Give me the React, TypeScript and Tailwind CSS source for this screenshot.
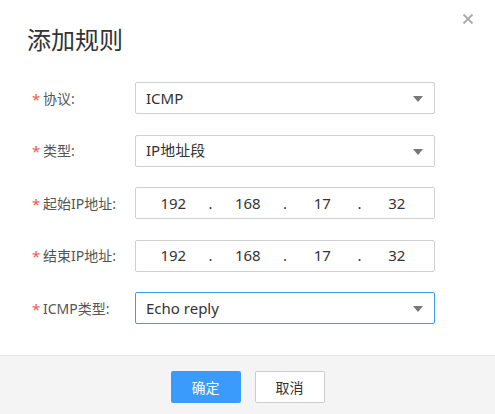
import React from "react";

const font = { fontFamily: '"Noto Sans", "Noto Sans CJK SC", sans-serif' };

function Label({ text }: { text: string }) {
  return (
    <div className="w-[103px] shrink-0 flex items-center text-[14px] text-[#555]">
      <span className="text-[#f25757] text-[15px] w-[11px] leading-none mt-[2px]">*</span>
      <span>{text}</span>
    </div>
  );
}

function Arrow() {
  return (
    <svg width="10" height="6" viewBox="0 0 10 6" className="absolute right-[11px] top-[13px]">
      <path d="M0 0h10L5 6z" fill="#777" />
    </svg>
  );
}

function Select({ value, active }: { value: string; active?: boolean }) {
  return (
    <div
      className={
        active
          ? "relative w-[300px] h-[32px] border border-[#3d9bf5] rounded-[2px] flex items-center pl-[10px] text-[15px] text-[#333]"
          : "relative w-[300px] h-[32px] border border-[#cfcfcf] rounded-[2px] flex items-center pl-[10px] text-[15px] text-[#333]"
      }
    >
      {value}
      <Arrow />
    </div>
  );
}

function IpInput({ parts }: { parts: string[] }) {
  return (
    <div className="relative w-[300px] h-[32px] border border-[#cfcfcf] rounded-[2px] flex items-center text-[15px] text-[#333]">
      {parts.map((p, i) => (
        <React.Fragment key={i}>
          <span className="flex-1 text-center">{p}</span>
          {i < parts.length - 1 && <span className="w-0 flex justify-center">.</span>}
        </React.Fragment>
      ))}
    </div>
  );
}

export default function App() {
  const ip = ["192", "168", "17", "32"];

  return (
    <div className="w-[495px] h-[414px] bg-white relative flex flex-col" style={font}>
      <button className="absolute right-[21px] top-[13px] text-[#aaa]">
        <svg width="12" height="12" viewBox="0 0 12 12">
          <path d="M1.5 1.5l9 9M10.5 1.5l-9 9" stroke="#aaa" strokeWidth="1.8" />
        </svg>
      </button>

      <div className="pt-[24px] pl-[27px] h-[82px] shrink-0">
        <h1 className="text-[24px] leading-[32px] text-[#333]">添加规则</h1>
      </div>

      <div className="flex flex-col gap-[20.5px] pl-[32px]">
        <div className="flex items-center h-[32px]">
          <Label text="协议:" />
          <Select value="ICMP" />
        </div>
        <div className="flex items-center h-[32px]">
          <Label text="类型:" />
          <Select value="IP地址段" />
        </div>
        <div className="flex items-center h-[32px]">
          <Label text="起始IP地址:" />
          <IpInput parts={ip} />
        </div>
        <div className="flex items-center h-[32px]">
          <Label text="结束IP地址:" />
          <IpInput parts={ip} />
        </div>
        <div className="flex items-center h-[32px]">
          <Label text="ICMP类型:" />
          <Select value="Echo reply" active />
        </div>
      </div>

      <div className="mt-[31px] flex-1 border-t border-[#e8e8e8] bg-[#f4f4f4] flex justify-center gap-[14px] pt-[15px]">
        <button className="w-[70px] h-[32px] bg-[#3a9bfd] rounded-[2px] text-white text-[14px]">确定</button>
        <button className="w-[70px] h-[32px] bg-white border border-[#cccccc] rounded-[2px] text-[#333] text-[14px]">取消</button>
      </div>
    </div>
  );
}
